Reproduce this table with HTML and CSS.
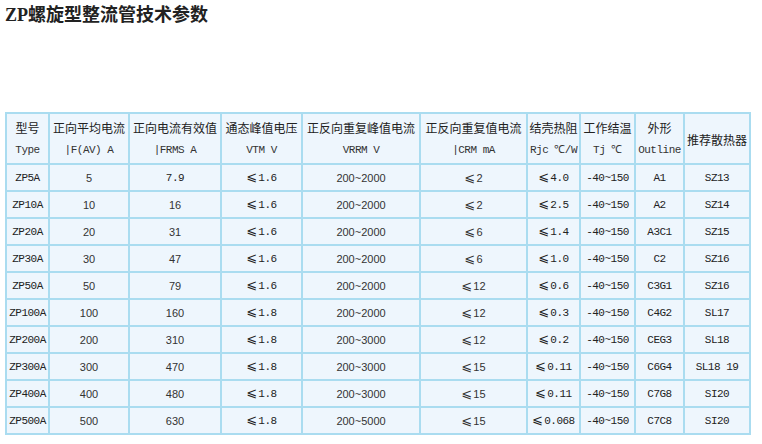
FILE: index.html
```html
<!DOCTYPE html>
<html lang="zh">
<head>
<meta charset="utf-8">
<link rel="stylesheet" href="styles.css">
</head>
<body>
<h1 class="title">ZP螺旋型整流管技术参数</h1>
<table class="spec">
<colgroup>
<col class="c1"><col class="c2"><col class="c3"><col class="c4"><col class="c5"><col class="c6"><col class="c7"><col class="c8"><col class="c9"><col class="c10">
</colgroup>
<thead>
<tr>
<th><div class="zh">型号</div><div class="en">Type</div></th>
<th><div class="zh">正向平均电流</div><div class="en">|F(AV) A</div></th>
<th><div class="zh">正向电流有效值</div><div class="en">|FRMS A</div></th>
<th><div class="zh">通态峰值电压</div><div class="en">VTM V</div></th>
<th><div class="zh">正反向重复峰值电流</div><div class="en">VRRM V</div></th>
<th><div class="zh">正反向重复值电流</div><div class="en">|CRM mA</div></th>
<th><div class="zh">结壳热阻</div><div class="en">Rjc ℃/W</div></th>
<th><div class="zh">工作结温</div><div class="en">Tj ℃</div></th>
<th><div class="zh">外形</div><div class="en">Outline</div></th>
<th><div class="zh">推荐散热器</div></th>
</tr>
</thead>
<tbody>
<tr><td class="m">ZP5A</td><td>5</td><td class="m">7.9</td><td class="m"><span class="le">⩽</span>1.6</td><td>200~2000</td><td><span class="le">⩽</span>2</td><td class="m"><span class="le">⩽</span>4.0</td><td class="m">-40~150</td><td class="m">A1</td><td class="m">SZ13</td></tr>
<tr><td class="m">ZP10A</td><td>10</td><td>16</td><td class="m"><span class="le">⩽</span>1.6</td><td>200~2000</td><td><span class="le">⩽</span>2</td><td class="m"><span class="le">⩽</span>2.5</td><td class="m">-40~150</td><td class="m">A2</td><td class="m">SZ14</td></tr>
<tr><td class="m">ZP20A</td><td>20</td><td>31</td><td class="m"><span class="le">⩽</span>1.6</td><td>200~2000</td><td><span class="le">⩽</span>6</td><td class="m"><span class="le">⩽</span>1.4</td><td class="m">-40~150</td><td class="m">A3C1</td><td class="m">SZ15</td></tr>
<tr><td class="m">ZP30A</td><td>30</td><td>47</td><td class="m"><span class="le">⩽</span>1.6</td><td>200~2000</td><td><span class="le">⩽</span>6</td><td class="m"><span class="le">⩽</span>1.0</td><td class="m">-40~150</td><td class="m">C2</td><td class="m">SZ16</td></tr>
<tr><td class="m">ZP50A</td><td>50</td><td>79</td><td class="m"><span class="le">⩽</span>1.6</td><td>200~2000</td><td><span class="le">⩽</span>12</td><td class="m"><span class="le">⩽</span>0.6</td><td class="m">-40~150</td><td class="m">C3G1</td><td class="m">SZ16</td></tr>
<tr><td class="m">ZP100A</td><td>100</td><td>160</td><td class="m"><span class="le">⩽</span>1.8</td><td>200~2000</td><td><span class="le">⩽</span>12</td><td class="m"><span class="le">⩽</span>0.3</td><td class="m">-40~150</td><td class="m">C4G2</td><td class="m">SL17</td></tr>
<tr><td class="m">ZP200A</td><td>200</td><td>310</td><td class="m"><span class="le">⩽</span>1.8</td><td>200~3000</td><td><span class="le">⩽</span>12</td><td class="m"><span class="le">⩽</span>0.2</td><td class="m">-40~150</td><td class="m">CEG3</td><td class="m">SL18</td></tr>
<tr><td class="m">ZP300A</td><td>300</td><td>470</td><td class="m"><span class="le">⩽</span>1.8</td><td>200~3000</td><td><span class="le">⩽</span>15</td><td class="m"><span class="le">⩽</span>0.11</td><td class="m">-40~150</td><td class="m">C6G4</td><td class="m">SL18 19</td></tr>
<tr><td class="m">ZP400A</td><td>400</td><td>480</td><td class="m"><span class="le">⩽</span>1.8</td><td>200~3000</td><td><span class="le">⩽</span>15</td><td class="m"><span class="le">⩽</span>0.11</td><td class="m">-40~150</td><td class="m">C7G8</td><td class="m">SI20</td></tr>
<tr><td class="m">ZP500A</td><td>500</td><td>630</td><td class="m"><span class="le">⩽</span>1.8</td><td>200~5000</td><td><span class="le">⩽</span>15</td><td class="m"><span class="le">⩽</span>0.068</td><td class="m">-40~150</td><td class="m">C7C8</td><td class="m">SI20</td></tr>
</tbody>
</table>
</body>
</html>
```

FILE: styles.css
```css
html, body {
  margin: 0;
  padding: 0;
  background: #ffffff;
}
body {
  padding: 5px 5px 0 5px;
  font-family: "Noto Sans CJK SC", "Noto Sans", sans-serif;
  color: #333333;
}
.title {
  margin: 0;
  height: 107px;
  font-size: 18px;
  line-height: 20px;
  font-weight: bold;
  color: #222222;
  font-family: "Liberation Serif", "Noto Sans CJK SC", serif;
}
.spec {
  border-collapse: collapse;
  table-layout: fixed;
  width: 745px;
  background: #eef6fd;
}
.c1 { width: 43px; }
.c2 { width: 80px; }
.c3 { width: 92px; }
.c4 { width: 81px; }
.c5 { width: 118px; }
.c6 { width: 107px; }
.c7 { width: 53px; }
.c8 { width: 55px; }
.c9 { width: 49px; }
.c10 { width: 66px; }
.spec th, .spec td {
  border: 2px solid #aadcf0;
  padding: 0;
  text-align: center;
  font-weight: normal;
  white-space: nowrap;
  overflow: hidden;
}
.spec th {
  height: 47px;
  padding-top: 2px;
}
.spec td {
  height: 25px;
  font-size: 11px;
  line-height: 14px;
  font-family: "Liberation Sans", "Noto Sans CJK SC", sans-serif;
  color: #333333;
}
.spec td.m {
  font-family: "Liberation Mono", "Noto Sans CJK SC", monospace;
  font-size: 11px;
  color: #222222;
  letter-spacing: -0.5px;
}
.le {
  font-family: "DejaVu Sans", sans-serif;
  font-size: 13px;
  letter-spacing: 0;
  margin-right: 1px;
}
.zh {
  font-size: 12px;
  line-height: 22px;
  color: #222222;
}
.en {
  font-family: "Liberation Mono", monospace;
  font-size: 11px;
  line-height: 23px;
  color: #333333;
  letter-spacing: -0.5px;
}
```
